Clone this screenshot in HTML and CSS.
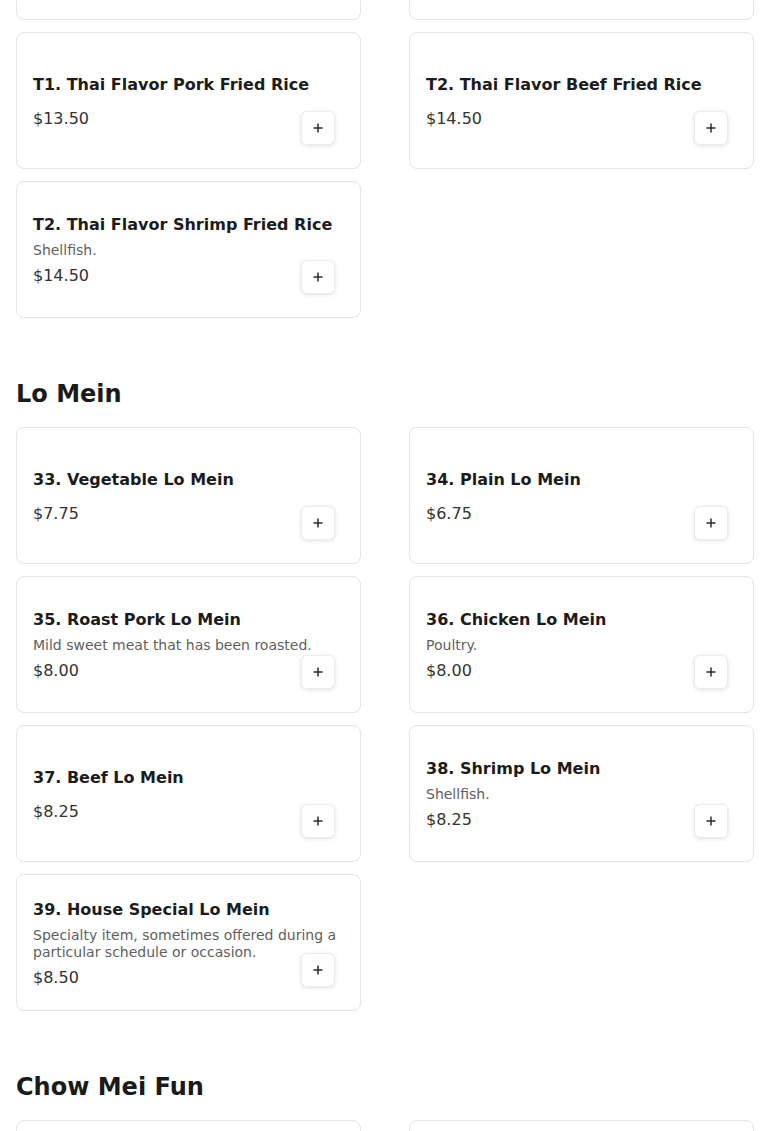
FILE: index.html
```html
<!DOCTYPE html>
<html lang="en">
<head>
<meta charset="utf-8">
<title>Menu</title>
<link rel="stylesheet" href="styles.css">
</head>
<body>
<main class="menu">
  <section class="section section-first">
    <div class="grid">
      <div class="card">
        <div class="info">
          <div class="title">30. House Special Fried Rice</div>
          <div class="price">$9.50</div>
        </div>
        <button class="add" aria-label="Add"><svg viewBox="0 0 10 10" width="10" height="10"><path d="M5 0.5V9.5M0.5 5H9.5" stroke="#2b2b2b" stroke-width="1.5" fill="none"/></svg></button>
      </div>
      <div class="card">
        <div class="info">
          <div class="title">T. Thai Flavor Chicken Fried Rice</div>
          <div class="price">$13.50</div>
        </div>
        <button class="add" aria-label="Add"><svg viewBox="0 0 10 10" width="10" height="10"><path d="M5 0.5V9.5M0.5 5H9.5" stroke="#2b2b2b" stroke-width="1.5" fill="none"/></svg></button>
      </div>
      <div class="card">
        <div class="info">
          <div class="title">T1. Thai Flavor Pork Fried Rice</div>
          <div class="price">$13.50</div>
        </div>
        <button class="add" aria-label="Add"><svg viewBox="0 0 10 10" width="10" height="10"><path d="M5 0.5V9.5M0.5 5H9.5" stroke="#2b2b2b" stroke-width="1.5" fill="none"/></svg></button>
      </div>
      <div class="card">
        <div class="info">
          <div class="title">T2. Thai Flavor Beef Fried Rice</div>
          <div class="price">$14.50</div>
        </div>
        <button class="add" aria-label="Add"><svg viewBox="0 0 10 10" width="10" height="10"><path d="M5 0.5V9.5M0.5 5H9.5" stroke="#2b2b2b" stroke-width="1.5" fill="none"/></svg></button>
      </div>
      <div class="card">
        <div class="info">
          <div class="title">T2. Thai Flavor Shrimp Fried Rice</div>
          <div class="desc">Shellfish.</div>
          <div class="price">$14.50</div>
        </div>
        <button class="add" aria-label="Add"><svg viewBox="0 0 10 10" width="10" height="10"><path d="M5 0.5V9.5M0.5 5H9.5" stroke="#2b2b2b" stroke-width="1.5" fill="none"/></svg></button>
      </div>
    </div>
  </section>

  <section class="section">
    <h2 class="heading">Lo Mein</h2>
    <div class="grid">
      <div class="card">
        <div class="info">
          <div class="title">33. Vegetable Lo Mein</div>
          <div class="price">$7.75</div>
        </div>
        <button class="add" aria-label="Add"><svg viewBox="0 0 10 10" width="10" height="10"><path d="M5 0.5V9.5M0.5 5H9.5" stroke="#2b2b2b" stroke-width="1.5" fill="none"/></svg></button>
      </div>
      <div class="card">
        <div class="info">
          <div class="title">34. Plain Lo Mein</div>
          <div class="price">$6.75</div>
        </div>
        <button class="add" aria-label="Add"><svg viewBox="0 0 10 10" width="10" height="10"><path d="M5 0.5V9.5M0.5 5H9.5" stroke="#2b2b2b" stroke-width="1.5" fill="none"/></svg></button>
      </div>
      <div class="card">
        <div class="info">
          <div class="title">35. Roast Pork Lo Mein</div>
          <div class="desc">Mild sweet meat that has been roasted.</div>
          <div class="price">$8.00</div>
        </div>
        <button class="add" aria-label="Add"><svg viewBox="0 0 10 10" width="10" height="10"><path d="M5 0.5V9.5M0.5 5H9.5" stroke="#2b2b2b" stroke-width="1.5" fill="none"/></svg></button>
      </div>
      <div class="card">
        <div class="info">
          <div class="title">36. Chicken Lo Mein</div>
          <div class="desc">Poultry.</div>
          <div class="price">$8.00</div>
        </div>
        <button class="add" aria-label="Add"><svg viewBox="0 0 10 10" width="10" height="10"><path d="M5 0.5V9.5M0.5 5H9.5" stroke="#2b2b2b" stroke-width="1.5" fill="none"/></svg></button>
      </div>
      <div class="card">
        <div class="info">
          <div class="title">37. Beef Lo Mein</div>
          <div class="price">$8.25</div>
        </div>
        <button class="add" aria-label="Add"><svg viewBox="0 0 10 10" width="10" height="10"><path d="M5 0.5V9.5M0.5 5H9.5" stroke="#2b2b2b" stroke-width="1.5" fill="none"/></svg></button>
      </div>
      <div class="card">
        <div class="info">
          <div class="title">38. Shrimp Lo Mein</div>
          <div class="desc">Shellfish.</div>
          <div class="price">$8.25</div>
        </div>
        <button class="add" aria-label="Add"><svg viewBox="0 0 10 10" width="10" height="10"><path d="M5 0.5V9.5M0.5 5H9.5" stroke="#2b2b2b" stroke-width="1.5" fill="none"/></svg></button>
      </div>
      <div class="card">
        <div class="info">
          <div class="title">39. House Special Lo Mein</div>
          <div class="desc">Specialty item, sometimes offered during a particular schedule or occasion.</div>
          <div class="price">$8.50</div>
        </div>
        <button class="add" aria-label="Add"><svg viewBox="0 0 10 10" width="10" height="10"><path d="M5 0.5V9.5M0.5 5H9.5" stroke="#2b2b2b" stroke-width="1.5" fill="none"/></svg></button>
      </div>
    </div>
  </section>

  <section class="section">
    <h2 class="heading">Chow Mei Fun</h2>
    <div class="grid">
      <div class="card">
        <div class="info">
          <div class="title">40. Vegetable Chow Mei Fun</div>
          <div class="price">$7.75</div>
        </div>
        <button class="add" aria-label="Add"><svg viewBox="0 0 10 10" width="10" height="10"><path d="M5 0.5V9.5M0.5 5H9.5" stroke="#2b2b2b" stroke-width="1.5" fill="none"/></svg></button>
      </div>
      <div class="card">
        <div class="info">
          <div class="title">41. Plain Chow Mei Fun</div>
          <div class="price">$6.75</div>
        </div>
        <button class="add" aria-label="Add"><svg viewBox="0 0 10 10" width="10" height="10"><path d="M5 0.5V9.5M0.5 5H9.5" stroke="#2b2b2b" stroke-width="1.5" fill="none"/></svg></button>
      </div>
    </div>
  </section>
</main>
</body>
</html>
```

FILE: styles.css
```css
* {
  box-sizing: border-box;
}

html, body {
  margin: 0;
  padding: 0;
  background: #ffffff;
}

body {
  font-family: "DejaVu Sans", "Noto Sans", sans-serif;
  color: #1c1c1c;
  overflow: hidden;
}

.menu {
  padding: 0 16px;
  margin-top: -117px;
}

.section-first {
  margin: 0;
}

.heading {
  margin: 60px 0 17px;
  font-size: 24px;
  line-height: 32px;
  font-weight: bold;
  color: #1a1a1a;
}

.grid {
  display: grid;
  grid-template-columns: 345px 345px;
  column-gap: 48px;
  row-gap: 12px;
}

.card {
  position: relative;
  display: flex;
  align-items: center;
  min-height: 137px;
  padding: 17px 16px 15px;
  border: 1px solid #e4e4e4;
  border-radius: 8px;
  background: #ffffff;
}

.info {
  display: flex;
  flex-direction: column;
}

.title {
  font-size: 16px;
  line-height: 24px;
  font-weight: bold;
  color: #1c1c1c;
  margin-bottom: 5px;
}

.desc {
  font-size: 14px;
  line-height: 17px;
  color: #5f5f5f;
}

.price {
  font-size: 16px;
  line-height: 24px;
  color: #333333;
  margin-top: 5px;
}

.add {
  position: absolute;
  right: 25px;
  bottom: 23px;
  width: 34px;
  height: 34px;
  padding: 0;
  display: flex;
  align-items: center;
  justify-content: center;
  background: #ffffff;
  border: 1px solid #ececec;
  border-radius: 6px;
  box-shadow: 0 1px 4px rgba(0, 0, 0, 0.12);
  cursor: pointer;
}
```
